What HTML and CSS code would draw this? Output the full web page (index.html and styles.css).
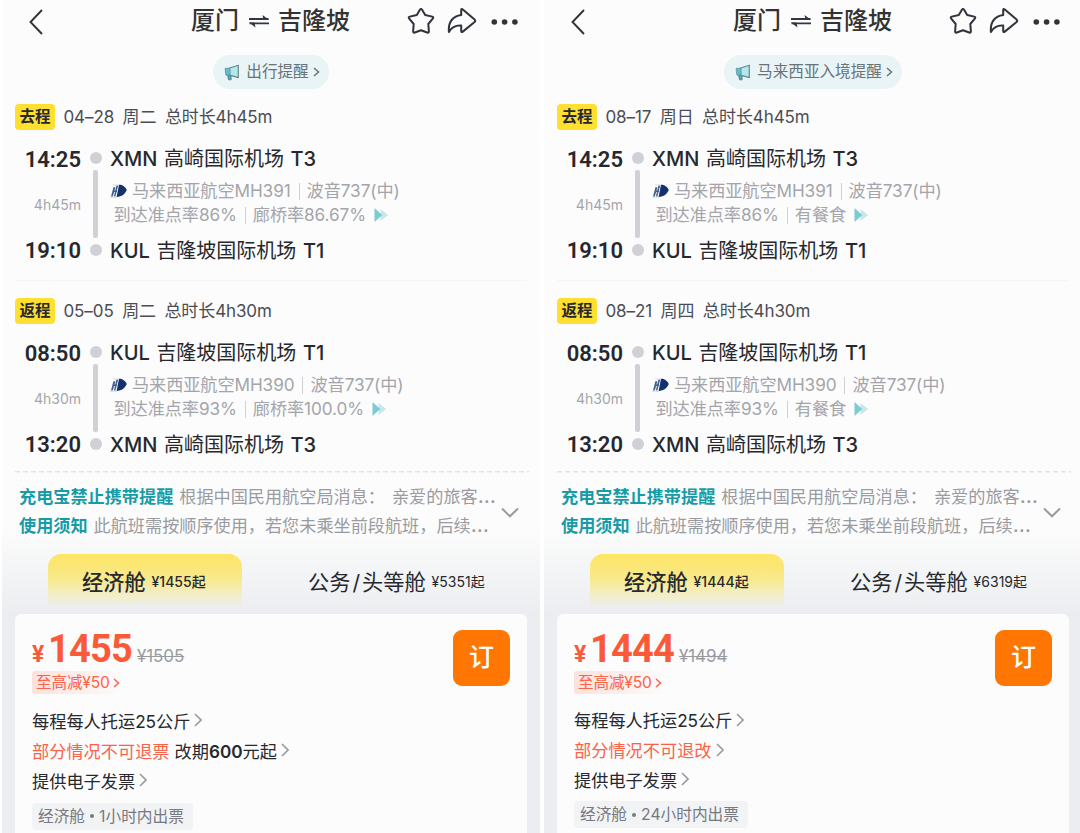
FILE: index.html
```
<!DOCTYPE html>
<html lang="zh-CN">
<head>
    <meta charset="UTF-8">
    <meta name="viewport" content="width=device-width, initial-scale=1.0">
    <title>厦门 ⇌ 吉隆坡</title>
    <link rel="stylesheet" href="styles.css">
</head>
<body>
    <!-- Iconos compartidos -->
    <svg class="sprite" width="0" height="0">
        <symbol id="back" viewBox="0 0 14 26"><path d="M13 1 1.5 13 13 25" fill="none" stroke="#333" stroke-width="1.9"/></symbol>
        <symbol id="swap" viewBox="0 0 20 14"><path d="M0 5H19.5M20 9.4H.5" stroke="#333644" stroke-width="1.8"/><path d="M13.5 1 20 5.8H14.5zM6.5 13.4 0 8.6H5.5z" fill="#333644"/></symbol>
        <symbol id="star" viewBox="0 0 28 28"><path d="M12.9 2.8Q14 1.1 15.1 2.8L18.2 8 25.2 9.6Q27 10.2 25.8 11.6L21.3 17 21.9 24.3Q21.9 26.2 20.2 25.5L14 23.2 7.8 25.5Q6.1 26.2 6.1 24.3L6.7 17 2.2 11.6Q1 10.2 2.8 9.6L9.8 8Z" fill="none" stroke="#30333c" stroke-width="2" stroke-linejoin="round"/></symbol>
        <symbol id="share" viewBox="0 0 30 28"><path d="M14.2 3.2Q14.2 1.2 15.8 2.5L27.6 12.6Q28.8 13.8 27.6 15L15.8 24.6Q14.2 25.8 14.2 24V18.6C8.5 18.2 4.8 20 1.9 25 1.2 15.5 5.5 9.4 14.2 8Z" fill="none" stroke="#30333c" stroke-width="2" stroke-linejoin="round"/></symbol>
        <symbol id="more" viewBox="0 0 28 8"><circle cx="3.3" cy="4" r="2.8" fill="#333"/><circle cx="13.6" cy="4" r="2.8" fill="#333"/><circle cx="23.9" cy="4" r="2.8" fill="#333"/></symbol>
        <symbol id="horn" viewBox="0 0 16 17"><path d="M3.6 11.2H7L7.2 15.8H4.5Z" fill="#4ba9b8" stroke="#587880" stroke-width=".8"/><path d="M5.5 4 14.3 1.2V13.6L5.5 11.2Z" fill="#b5e5ed" stroke="#6d858c" stroke-width="1.2" stroke-linejoin="round"/><path d="M1.2 4.3H6V11.2H2Q1.2 8 1.2 4.3Z" fill="#62bccb" stroke="#58949f" stroke-width=".8"/></symbol>
        <symbol id="chev" viewBox="0 0 8 14"><path d="M1 1 7 7 1 13" fill="none" stroke="currentColor" stroke-width="1.6"/></symbol>
        <symbol id="chev-small" viewBox="0 0 7 10"><path d="M1 1 5.5 5 1 9" fill="none" stroke="currentColor" stroke-width="1.5"/></symbol>
        <symbol id="down" viewBox="0 0 18 11"><path d="M1 1.5 9 9.3 17 1.5" fill="none" stroke="#999ba0" stroke-width="2"/></symbol>
        <symbol id="airline" viewBox="0 0 17 14"><path d="M9 .7C13 .5 15.5 3.2 16.8 6 14.8 10.2 12 12.6 6.6 13Z" fill="#12316d"/><path d="M3.4 3.2H5.4L2.8 12.4H1ZM6.4 1.5H8.2L5.4 12.6H3.9Z" fill="#42608f"/><path d="M4 7.2H7" stroke="#42608f" stroke-width="1.6"/><path d="M3 1H9M0 13.3H7" stroke="#cbd3e0" stroke-width=".8"/></symbol>
        <symbol id="play" viewBox="0 0 15 14"><path d="M6.5 1 14.2 7 6.5 13Z" fill="#c5e8ea"/><path d="M.5 0 8.3 7 .5 14Z" fill="#7dcbd2"/></symbol>
    </svg>

    <div class="compare">
        <section class="panel">
            <header class="topbar">
                <svg class="back"><use href="#back"/></svg>
                <h1>厦门<svg class="swap"><use href="#swap"/></svg>吉隆坡</h1>
                <div class="actions">
                    <svg class="star"><use href="#star"/></svg>
                    <svg class="share"><use href="#share"/></svg>
                    <svg class="more"><use href="#more"/></svg>
                </div>
            </header>
            <div class="tip"><svg class="horn"><use href="#horn"/></svg><span>出行提醒</span><svg class="chev small"><use href="#chev-small"/></svg></div>

            <div class="leg">
                <div class="leg-head"><b class="badge">去程</b><span>04–28</span><span>周二</span><span>总时长4h45m</span></div>
                <div class="route">
                    <div class="times"><b>14:25</b><span>4h45m</span><b>19:10</b></div>
                    <div class="track"><i class="dot"></i><i class="bar"></i><i class="dot"></i></div>
                    <div class="stops">
                        <div class="airport"><span>XMN</span><span>高崎国际机场</span><span>T3</span></div>
                        <div class="info">
                            <div class="plane"><svg class="airline"><use href="#airline"/></svg><span>马来西亚航空MH391</span><i class="sep"></i><span>波音737(中)</span></div>
                            <div class="rate"><span>到达准点率86%</span><i class="sep"></i><span>廊桥率86.67%</span><svg class="play"><use href="#play"/></svg></div>
                        </div>
                        <div class="airport"><span>KUL</span><span>吉隆坡国际机场</span><span>T1</span></div>
                    </div>
                </div>
            </div>
            <div class="leg">
                <div class="leg-head"><b class="badge">返程</b><span>05–05</span><span>周二</span><span>总时长4h30m</span></div>
                <div class="route">
                    <div class="times"><b>08:50</b><span>4h30m</span><b>13:20</b></div>
                    <div class="track"><i class="dot"></i><i class="bar"></i><i class="dot"></i></div>
                    <div class="stops">
                        <div class="airport"><span>KUL</span><span>吉隆坡国际机场</span><span>T1</span></div>
                        <div class="info">
                            <div class="plane"><svg class="airline"><use href="#airline"/></svg><span>马来西亚航空MH390</span><i class="sep"></i><span>波音737(中)</span></div>
                            <div class="rate"><span>到达准点率93%</span><i class="sep"></i><span>廊桥率100.0%</span><svg class="play"><use href="#play"/></svg></div>
                        </div>
                        <div class="airport"><span>XMN</span><span>高崎国际机场</span><span>T3</span></div>
                    </div>
                </div>
            </div>

            <div class="notice">
                <div class="notice-text">
                    <p><b>充电宝禁止携带提醒</b><span>根据中国民用航空局消息：</span><span class="more-text">亲爱的旅客<i>…</i></span></p>
                    <p><b>使用须知</b><span>此航班需按顺序使用，若您未乘坐前段航班，后续<i>…</i></span></p>
                </div>
                <svg class="down"><use href="#down"/></svg>
            </div>

            <div class="tabs">
                <div class="tab active"><span>经济舱</span><small>¥1455起</small></div>
                <div class="tab"><span>公务<em>/</em>头等舱</span><small>¥5351起</small></div>
            </div>

            <div class="card">
                <div class="fare">
                    <div class="price"><span class="yen">¥</span><b>1455</b><del>¥1505</del></div>
                    <div class="coupon">至高减¥50<svg class="chev small"><use href="#chev-small"/></svg></div>
                    <ul class="rules">
                        <li>每程每人托运25公斤<svg class="chev"><use href="#chev"/></svg></li>
                        <li><span class="red">部分情况不可退票</span><span class="change">改期<b>600</b>元起</span><svg class="chev"><use href="#chev"/></svg></li>
                        <li>提供电子发票<svg class="chev"><use href="#chev"/></svg></li>
                    </ul>
                    <div class="issue">经济舱<i></i>1小时内出票</div>
                </div>
                <div class="book">订</div>
            </div>
        </section>

        <section class="panel">
            <header class="topbar">
                <svg class="back"><use href="#back"/></svg>
                <h1>厦门<svg class="swap"><use href="#swap"/></svg>吉隆坡</h1>
                <div class="actions">
                    <svg class="star"><use href="#star"/></svg>
                    <svg class="share"><use href="#share"/></svg>
                    <svg class="more"><use href="#more"/></svg>
                </div>
            </header>
            <div class="tip"><svg class="horn"><use href="#horn"/></svg><span>马来西亚入境提醒</span><svg class="chev small"><use href="#chev-small"/></svg></div>

            <div class="leg">
                <div class="leg-head"><b class="badge">去程</b><span>08–17</span><span>周日</span><span>总时长4h45m</span></div>
                <div class="route">
                    <div class="times"><b>14:25</b><span>4h45m</span><b>19:10</b></div>
                    <div class="track"><i class="dot"></i><i class="bar"></i><i class="dot"></i></div>
                    <div class="stops">
                        <div class="airport"><span>XMN</span><span>高崎国际机场</span><span>T3</span></div>
                        <div class="info">
                            <div class="plane"><svg class="airline"><use href="#airline"/></svg><span>马来西亚航空MH391</span><i class="sep"></i><span>波音737(中)</span></div>
                            <div class="rate"><span>到达准点率86%</span><i class="sep"></i><span>有餐食</span><svg class="play"><use href="#play"/></svg></div>
                        </div>
                        <div class="airport"><span>KUL</span><span>吉隆坡国际机场</span><span>T1</span></div>
                    </div>
                </div>
            </div>
            <div class="leg">
                <div class="leg-head"><b class="badge">返程</b><span>08–21</span><span>周四</span><span>总时长4h30m</span></div>
                <div class="route">
                    <div class="times"><b>08:50</b><span>4h30m</span><b>13:20</b></div>
                    <div class="track"><i class="dot"></i><i class="bar"></i><i class="dot"></i></div>
                    <div class="stops">
                        <div class="airport"><span>KUL</span><span>吉隆坡国际机场</span><span>T1</span></div>
                        <div class="info">
                            <div class="plane"><svg class="airline"><use href="#airline"/></svg><span>马来西亚航空MH390</span><i class="sep"></i><span>波音737(中)</span></div>
                            <div class="rate"><span>到达准点率93%</span><i class="sep"></i><span>有餐食</span><svg class="play"><use href="#play"/></svg></div>
                        </div>
                        <div class="airport"><span>XMN</span><span>高崎国际机场</span><span>T3</span></div>
                    </div>
                </div>
            </div>

            <div class="notice">
                <div class="notice-text">
                    <p><b>充电宝禁止携带提醒</b><span>根据中国民用航空局消息：</span><span class="more-text">亲爱的旅客<i>…</i></span></p>
                    <p><b>使用须知</b><span>此航班需按顺序使用，若您未乘坐前段航班，后续<i>…</i></span></p>
                </div>
                <svg class="down"><use href="#down"/></svg>
            </div>

            <div class="tabs">
                <div class="tab active"><span>经济舱</span><small>¥1444起</small></div>
                <div class="tab"><span>公务<em>/</em>头等舱</span><small>¥6319起</small></div>
            </div>

            <div class="card">
                <div class="fare">
                    <div class="price"><span class="yen">¥</span><b>1444</b><del>¥1494</del></div>
                    <div class="coupon">至高减¥50<svg class="chev small"><use href="#chev-small"/></svg></div>
                    <ul class="rules compact">
                        <li>每程每人托运25公斤<svg class="chev"><use href="#chev"/></svg></li>
                        <li><span class="red">部分情况不可退改</span><svg class="chev"><use href="#chev"/></svg></li>
                        <li>提供电子发票<svg class="chev"><use href="#chev"/></svg></li>
                    </ul>
                    <div class="issue">经济舱<i></i>24小时内出票</div>
                </div>
                <div class="book">订</div>
            </div>
        </section>
    </div>
</body>
</html>
```
FILE: styles.css
```
* {
    box-sizing: border-box;
}
body {
    margin: 0;
    background: #fff;
    color: #26282e;
    font-family: Inter, "Noto Sans CJK SC", sans-serif;
    overflow: hidden;
}
h1, p, ul {
    margin: 0;
    padding: 0;
}
svg {
    display: block;
    flex: none;
}
.sprite {
    position: absolute;
}
.compare {
    display: flex;
    gap: 4px;
    height: 833px;
    padding-left: 2px;
    overflow: hidden;
}
.panel {
    flex: none;
    width: 538px;
    height: 833px;
    padding: 0 13px;
    overflow: hidden;
    white-space: nowrap;
    background: linear-gradient(#fcfcfc 530px, #ebedf0 614px);
}

/* Cabecera */
.topbar {
    display: grid;
    grid-template-columns: 176px 1fr 122px;
    align-items: center;
    height: 42px;
}
.back {
    width: 14px;
    height: 26px;
    margin: 1px 0 0 14px;
}
h1 {
    display: flex;
    align-items: center;
    font-size: 24px;
    line-height: 42px;
    font-weight: 500;
    color: #333;
}
.swap {
    width: 20px;
    height: 14px;
    margin: 0 9px 0 10px;
}
.actions {
    display: flex;
    align-items: center;
}
.star {
    width: 28px;
    height: 28px;
    margin-left: 2px;
}
.share {
    width: 30px;
    height: 28px;
    margin-left: 12px;
}
.more {
    width: 28px;
    height: 8px;
    margin: 1px 0 0 14px;
}
.tip {
    display: flex;
    align-items: center;
    width: fit-content;
    height: 34px;
    margin: 13px auto;
    padding: 0 9px 0 11px;
    border-radius: 17px;
    background: #e9f4f6;
    color: #6a7378;
    font-size: 15.6px;
}
.tip span {
    line-height: 34px;
}
.horn {
    width: 16px;
    height: 17px;
    margin-right: 6px;
}
.chev {
    width: 8px;
    height: 14px;
    margin-left: 4px;
    color: #999ba0;
}
.chev.small {
    width: 7px;
    height: 10px;
    color: inherit;
}

/* Trayectos */
.leg {
    height: 178px;
}
.leg + .leg {
    height: 191px;
    padding-top: 15px;
    border-top: 1px solid #f5f5f6;
}
.leg-head {
    display: flex;
    align-items: center;
    height: 30px;
    font-size: 17px;
    color: #4b4d54;
    letter-spacing: -0.1px;
}
.leg-head span {
    margin-right: 8.5px;
    line-height: 30px;
}
.leg-head .badge {
    width: 40px;
    height: 26px;
    margin-right: 8.5px;
    border-radius: 4px;
    background: #ffdf30;
    color: #26282e;
    font-size: 15.5px;
    font-weight: 700;
    line-height: 25px;
    text-align: center;
}
.route {
    display: grid;
    grid-template-columns: 66px 29px 1fr;
    height: 116px;
    margin-top: 15px;
}
.times {
    display: flex;
    flex-direction: column;
    justify-content: space-between;
    text-align: right;
}
.times b {
    font: 600 22px/25px Roboto, sans-serif;
}
.times span {
    font-size: 14px;
    line-height: 20px;
    color: #a4a5ab;
}
.track {
    display: flex;
    flex-direction: column;
    align-items: center;
    padding: 5px 0;
}
.dot {
    width: 12px;
    height: 12px;
    border-radius: 50%;
    background: #d0d0d7;
}
.bar {
    width: 4.5px;
    height: 68px;
    margin: 6px;
    border-radius: 2px;
    background: #d0d0d7;
}
.stops {
    display: flex;
    flex-direction: column;
}
.airport {
    display: flex;
    gap: 6.5px;
    font-size: 20px;
    font-weight: 500;
    line-height: 24px;
}
.airport span:nth-child(2) {
    font-weight: 400;
}
.info {
    height: 68px;
    padding-top: 8px;
    color: #a4a5ab;
    font-size: 17.2px;
    letter-spacing: -0.1px;
}
.plane, .rate {
    display: flex;
    align-items: center;
    height: 24px;
}
.plane span, .rate span {
    line-height: 24px;
}
.rate {
    padding-left: 3.5px;
}
.airline {
    width: 17px;
    height: 14px;
    margin-right: 5px;
}
.sep {
    width: 1px;
    height: 17px;
    margin: 0 7px 0 8px;
    background: #d2d2d6;
}
.play {
    width: 15px;
    height: 14px;
    margin-left: 8px;
}

/* Avisos */
.notice {
    display: flex;
    justify-content: space-between;
    width: 514px;
    height: 83px;
    padding: 12px 10px 0 4px;
    color: #999ba0;
    font-size: 17.15px;
    background: repeating-linear-gradient(90deg, #e3e4e6 0 5px, transparent 5px 8px) 0 0 / 100% 1.5px no-repeat;
}
.notice p {
    display: flex;
    height: 28.5px;
    line-height: 27px;
}
.notice p b {
    margin-right: 6px;
    font-weight: 700;
    color: #179ba6;
}
.notice i {
    font-style: normal;
    font-size: 21px;
    line-height: 20px;
}
.more-text {
    margin-left: 7px;
}
.down {
    width: 18px;
    height: 11px;
    margin-top: 24px;
}

/* Cabinas */
.tabs {
    display: grid;
    grid-template-columns: 194px 1fr;
    height: 60px;
    padding-left: 33px;
}
.tab {
    display: flex;
    align-items: center;
    height: 56px;
    padding: 0 0 4px 66px;
    font-size: 21.2px;
}
.tab em {
    padding: 0 2px;
    font-style: normal;
}
.tab small {
    margin: 2px 0 0 6px;
    font-size: 14px;
}
.tab.active {
    padding-left: 34px;
    border-radius: 13px 13px 0 0;
    background: linear-gradient(#fee562, #f8e98d 45%, rgba(246, 238, 190, 0) 95%);
    font-weight: 500;
}

/* Tarifa */
.card {
    display: flex;
    justify-content: space-between;
    width: 512px;
    height: 240px;
    padding: 16px 17px;
    border-radius: 6px;
    background: #fcfcfc;
}
.price {
    display: flex;
    align-items: baseline;
    height: 41px;
    color: #fb5a38;
    font-family: Roboto, "Noto Sans CJK SC", sans-serif;
    line-height: 38px;
}
.yen {
    width: 16px;
    font-size: 23px;
    font-weight: 700;
}
.price b {
    font-size: 38px;
    letter-spacing: -0.8px;
}
.price del {
    margin-left: 5px;
    font: 400 17px Inter, sans-serif;
    letter-spacing: -0.1px;
    color: #999ba0;
}
.coupon {
    display: flex;
    align-items: center;
    width: 92px;
    height: 23px;
    padding-left: 4px;
    border-radius: 3px;
    background: linear-gradient(90deg, #fde1dc, #fcfcfc);
    color: #fb6348;
    font-size: 15.6px;
    line-height: 23px;
    letter-spacing: -0.15px;
}
.coupon .chev {
    margin-left: 3px;
}
.rules {
    list-style: none;
    margin-top: 11px;
    font-size: 17.2px;
}
.rules li {
    display: flex;
    align-items: center;
    height: 30.2px;
}
.rules.compact li {
    height: 29.7px;
}
.red {
    color: #fb6348;
}
.change {
    margin-left: 5px;
}
.change b {
    font-weight: 600;
}
.issue {
    display: flex;
    align-items: center;
    width: fit-content;
    height: 27px;
    margin-top: 7px;
    padding: 0 9px 0 6px;
    border-radius: 4px;
    background: #f2f3f5;
    color: #777980;
    font-size: 15.7px;
    line-height: 25px;
}
.issue i {
    width: 4px;
    height: 4px;
    margin: 0 5px;
    border-radius: 50%;
    background: #777980;
}
.book {
    width: 57px;
    height: 56px;
    border-radius: 9px;
    background: #ff7602;
    color: #fff;
    font-size: 25px;
    font-weight: 500;
    line-height: 55px;
    text-align: center;
}
```
